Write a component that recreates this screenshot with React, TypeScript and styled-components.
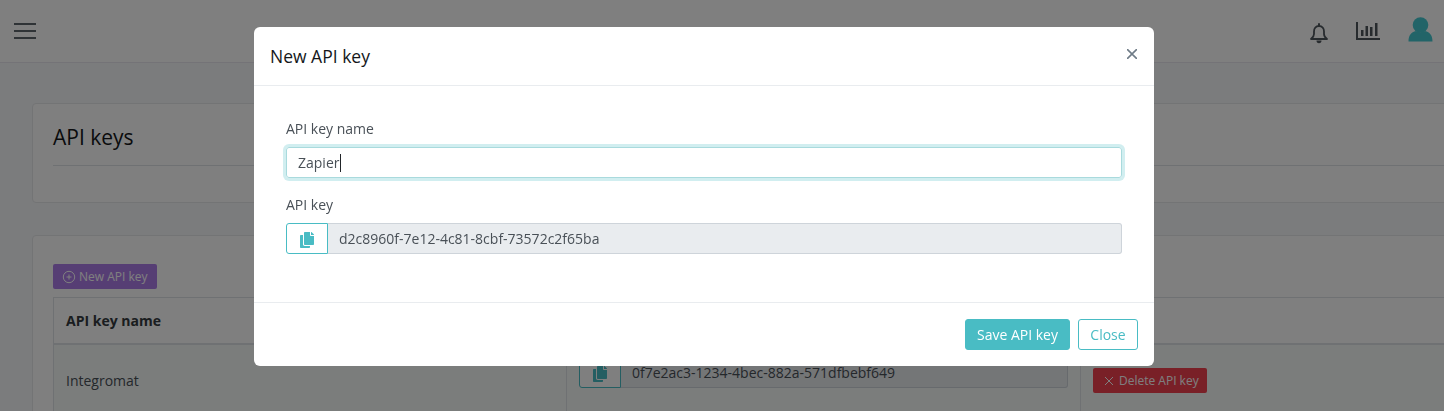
import React from "react";
import styled, { createGlobalStyle } from "styled-components";
import { FaCopy } from "react-icons/fa";

const Global = createGlobalStyle`
  html, body { margin: 0; padding: 0; height: 411px; overflow: hidden; background: #f7f9fb; }
  body { font-family: "Open Sans", "Liberation Sans", sans-serif; font-size: 14px; color: #495057; }
  * { box-sizing: border-box; }
`;

const Page = styled.div`
  height: 411px;
  overflow: hidden;
  background: #f7f9fb;
`;
const TopBar = styled.header`
  height: 63px;
  background: #fff;
  border-bottom: 1px solid #e9e7ee;
  display: flex;
  align-items: center;
  justify-content: space-between;
  padding: 0 11px 0 14px;
`;
const BarIcons = styled.div`
  display: flex;
  align-items: center;
  gap: 28px;
`;
const IconSlot = styled.span<{ $mt: number }>`
  display: flex;
  margin-top: ${(p) => p.$mt}px;
`;
const Content = styled.main`
  width: 1520px;
  padding: 40px 0 0 32px;
  display: flex;
  flex-direction: column;
  gap: 32px;
`;
const Card = styled.section<{ $h: number; $pt: number }>`
  height: ${(p) => p.$h}px;
  background: #fff;
  border: 1px solid #e6e8ea;
  border-radius: 4px;
  padding: ${(p) => p.$pt}px 20px 0;
  flex: none;
`;
const PageTitle = styled.h2`
  margin: 0;
  padding-bottom: 15px;
  border-bottom: 1px solid #dee2e6;
  font-size: 21px;
  line-height: 26px;
  font-weight: 400;
  color: #14171a;
`;
const TagButton = styled.div<{ $bg: string; $pr: number }>`
  display: inline-flex;
  align-items: center;
  gap: 3px;
  height: 25px;
  padding: 0 ${(p) => p.$pr}px 0 9px;
  background: ${(p) => p.$bg};
  color: #fff;
  font-size: 12px;
  border-radius: 2px;
  white-space: nowrap;
`;
const Table = styled.div`
  margin-top: 8px;
  border: 1px solid #dee2e6;
  display: grid;
  grid-template-columns: 513px 514px 1fr;
`;
const Head = styled.div`
  height: 47px;
  display: flex;
  align-items: center;
  padding-left: 12px;
  border-bottom: 2px solid #dee2e6;
  border-right: 1px solid #dee2e6;
  font-weight: 700;
  font-size: 14px;
  color: #343a40;
`;
const Cell = styled.div<{ $top?: boolean }>`
  height: 71px;
  display: flex;
  align-items: ${(p) => (p.$top ? "flex-start" : "center")};
  padding: ${(p) => (p.$top ? "12px 12px 0" : "0 12px")};
  border-right: 1px solid #dee2e6;
  background: #f7faf9;
  color: #495057;
  font-size: 14px;
`;
const Backdrop = styled.div`
  position: fixed;
  inset: 0;
  background: rgba(0, 0, 0, 0.5);
`;
const Modal = styled.div`
  position: fixed;
  left: 254px;
  top: 27px;
  width: 900px;
  height: 339px;
  background: #fff;
  border-radius: 6px;
  display: flex;
  flex-direction: column;
`;
const ModalHead = styled.div`
  height: 59px;
  flex: none;
  display: flex;
  align-items: center;
  justify-content: space-between;
  padding: 0 16px;
  border-bottom: 1px solid #e9ecef;
`;
const ModalTitle = styled.h5`
  margin: 0;
  font-size: 17.5px;
  font-weight: 400;
  color: #14171a;
`;
const CloseX = styled.span`
  display: flex;
  margin: 0 1px 4px 0;
`;
const ModalBody = styled.div`
  flex: 1;
  padding: 32px;
  display: flex;
  flex-direction: column;
`;
const Label = styled.label`
  font-size: 14px;
  line-height: 21px;
  color: #495057;
  margin-bottom: 8px;
`;
const TextField = styled.div`
  height: 31px;
  flex: none;
  border: 1px solid #a9dadd;
  border-radius: 3px;
  box-shadow: 0 0 0 3px rgba(73, 188, 196, 0.25);
  display: flex;
  align-items: center;
  padding-left: 11px;
  font-size: 14px;
  color: #495057;
  margin-bottom: 16px;
`;
const Caret = styled.span`
  display: inline-block;
  width: 1px;
  height: 18px;
  background: #212529;
  margin-left: 1px;
`;
const Group = styled.div`
  display: flex;
  height: 31px;
  width: 100%;
  flex: none;
`;
const CopyBtn = styled.div`
  width: 42px;
  flex: none;
  display: flex;
  align-items: center;
  justify-content: center;
  padding-top: 3px;
  border: 1px solid #49bcc4;
  border-radius: 3px 0 0 3px;
  background: #fff;
  color: #49bcc4;
`;
const KeyValue = styled.div`
  flex: 1;
  display: flex;
  align-items: center;
  padding-left: 11px;
  background: #e9ecef;
  border: 1px solid #ced4da;
  border-left: 0;
  border-radius: 0 3px 3px 0;
  font-size: 14px;
  color: #495057;
`;
const ModalFoot = styled.div`
  height: 64px;
  flex: none;
  display: flex;
  align-items: center;
  justify-content: flex-end;
  gap: 8px;
  padding: 0 16px;
  border-top: 1px solid #e9ecef;
`;
const Btn = styled.button<{ $solid?: boolean }>`
  height: 31px;
  width: ${(p) => (p.$solid ? 105 : 60)}px;
  padding: 0;
  border: 1px solid #49bcc4;
  border-radius: 3px;
  background: ${(p) => (p.$solid ? "#49bcc4" : "#fff")};
  color: ${(p) => (p.$solid ? "#fff" : "#49bcc4")};
  font-family: inherit;
  font-size: 14px;
`;

export default function App() {
  return (
    <Page>
      <Global />
      <TopBar>
        <svg width="22" height="18" viewBox="0 0 22 18">
          <path stroke="#5f666d" strokeWidth="2" d="M0 2h22M0 9h22M0 16h22" />
        </svg>
        <BarIcons>
          <IconSlot $mt={5}>
            <svg width="18" height="21" viewBox="0 0 18 21" fill="none">
              <path stroke="#4f565d" strokeWidth="1.800" strokeLinejoin="round" d="M9 3C5.800 3 4 5.500 4 8.500v2.500c0 2.200-1.100 3.600-3 5h16c-1.900-1.400-3-2.800-3-5V8.500C14 5.500 12.200 3 9 3z" />
              <path fill="#4f565d" d="M6.500 17.500h5a2.500 2.800 0 0 1-5 0zM8 1a1 1 0 0 1 2 0v2H8z" />
            </svg>
          </IconSlot>
          <IconSlot $mt={0}>
            <svg width="24" height="18" viewBox="0 0 24 18">
              <path fill="#4f565d" d="M0 0h2v16h22v2H0zM5 8h2.500v6H5zM9.500 4H12v10H9.500zM14 5h2.500v9H14zM19 1h2.500v13H19z" />
            </svg>
          </IconSlot>
          <IconSlot $mt={-4}>
            <svg width="25" height="25" viewBox="0 0 25 25">
              <circle cx="12.500" cy="8" r="7.800" fill="#45c8d0" />
              <path fill="#45c8d0" d="M0.500 24.500c0-6 2.500-9.500 7.500-10.500 2.800 1.500 6.200 1.500 9 0 5 1 7.500 4.500 7.500 10.500z" />
            </svg>
          </IconSlot>
        </BarIcons>
      </TopBar>
      <Content>
        <Card $h={100} $pt={20}>
          <PageTitle>API keys</PageTitle>
        </Card>
        <Card $h={240} $pt={28}>
          <TagButton $bg="#ad7ce8" $pr={9}>
            <svg width="14" height="14" viewBox="0 0 14 14" fill="none">
              <circle cx="7" cy="7" r="5.700" stroke="#fff" />
              <path stroke="#fff" d="M7 4.500v5M4.500 7h5" />
            </svg>
            New API key
          </TagButton>
          <Table>
            <Head>API key name</Head>
            <Head>API key</Head>
            <Head />
            <Cell>Integromat</Cell>
            <Cell $top>
              <Group>
                <CopyBtn>
                  <FaCopy size={16} />
                </CopyBtn>
                <KeyValue>0f7e2ac3-1234-4bec-882a-571dfbebf649</KeyValue>
              </Group>
            </Cell>
            <Cell>
              <TagButton $bg="#f2404f" $pr={8}>
                <svg width="14" height="14" viewBox="0 0 14 14" fill="none">
                  <path stroke="#fff" d="M3 3l8 8M11 3l-8 8" />
                </svg>
                Delete API key
              </TagButton>
            </Cell>
          </Table>
        </Card>
      </Content>
      <Backdrop />
      <Modal>
        <ModalHead>
          <ModalTitle>New API key</ModalTitle>
          <CloseX>
            <svg width="10" height="10" viewBox="0 0 10 10">
              <path stroke="#6f7c87" strokeWidth="1.600" d="M0 0l10 10M10 0L0 10" />
            </svg>
          </CloseX>
        </ModalHead>
        <ModalBody>
          <Label>API key name</Label>
          <TextField>
            Zapier
            <Caret />
          </TextField>
          <Label>API key</Label>
          <Group>
            <CopyBtn>
              <FaCopy size={16} />
            </CopyBtn>
            <KeyValue>d2c8960f-7e12-4c81-8cbf-73572c2f65ba</KeyValue>
          </Group>
        </ModalBody>
        <ModalFoot>
          <Btn $solid>Save API key</Btn>
          <Btn>Close</Btn>
        </ModalFoot>
      </Modal>
    </Page>
  );
}
